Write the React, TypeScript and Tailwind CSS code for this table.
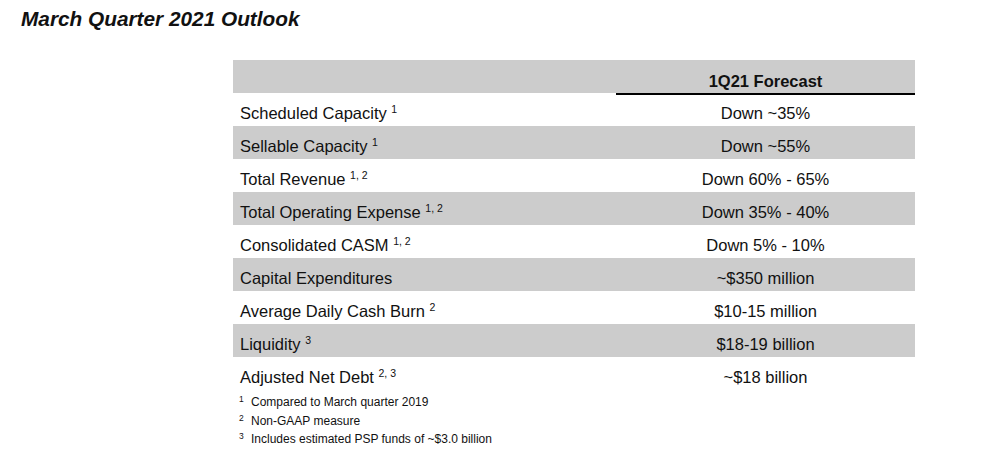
import React from "react";

type Row = { label: string; sup?: string; value: string; gray: boolean };

const rows: Row[] = [
  { label: "Sellable Capacity", sup: "1", value: "Down ~55%", gray: true },
  { label: "Total Revenue", sup: "1, 2", value: "Down 60% - 65%", gray: false },
  { label: "Total Operating Expense", sup: "1, 2", value: "Down 35% - 40%", gray: true },
  { label: "Consolidated CASM", sup: "1, 2", value: "Down 5% - 10%", gray: false },
  { label: "Capital Expenditures", value: "~$350 million", gray: true },
  { label: "Average Daily Cash Burn", sup: "2", value: "$10-15 million", gray: false },
  { label: "Liquidity", sup: "3", value: "$18-19 billion", gray: true },
  { label: "Adjusted Net Debt", sup: "2, 3", value: "~$18 billion", gray: false },
];

const footnotes = [
  { n: "1", t: "Compared to March quarter 2019" },
  { n: "2", t: "Non-GAAP measure" },
  { n: "3", t: "Includes estimated PSP funds of ~$3.0 billion" },
];

function Label({ label, sup }: { label: string; sup?: string }) {
  return (
    <span>
      {label}
      {sup ? (
        <>
          {" "}
          <sup className="text-[10.5px] top-[-6px]">{sup}</sup>
        </>
      ) : null}
    </span>
  );
}

export default function App() {
  return (
    <div
      className="w-[1007px] h-[473px] bg-white text-[#111111] overflow-hidden"
      style={{ fontFamily: '"Liberation Sans", Arial, sans-serif' }}
    >
      <div className="pl-[21px] pt-[7px] text-[20.8px] leading-[23px] font-bold italic">
        March Quarter 2021 Outlook
      </div>
      <div className="ml-[233px] mt-[30px] w-[682px]">
        <div className="h-[33px] bg-[#cccccc] flex">
          <div className="w-[383px]" />
          <div className="flex-1 text-center pt-[12px] text-[16.5px] leading-[18px] font-bold">
            1Q21 Forecast
          </div>
        </div>
        <div className="flex">
          <div className="w-[383px]" />
          <div className="flex-1 h-[2px] bg-black" />
        </div>
        <div className="h-[31px] flex text-[16.5px] leading-[18px] pt-[9px]">
          <div className="w-[383px] pl-[7px]">
            <Label label="Scheduled Capacity" sup="1" />
          </div>
          <div className="flex-1 text-center">Down ~35%</div>
        </div>
        {rows.map((r) => (
          <div
            key={r.label}
            className={`h-[33px] flex text-[16.5px] leading-[18px] pt-[11px] ${
              r.gray ? "bg-[#cccccc]" : "bg-white"
            }`}
          >
            <div className="w-[383px] pl-[7px]">
              <Label label={r.label} sup={r.sup} />
            </div>
            <div className="flex-1 text-center">{r.value}</div>
          </div>
        ))}
        <div className="pl-[6px] pt-[4px] flex flex-col">
          {footnotes.map((f) => (
            <div key={f.n} className="h-[18.5px] text-[12px] leading-[16px] flex">
              <span className="w-[12px]">
                <sup className="text-[8.5px] top-[-4px]">{f.n}</sup>
              </span>
              <span>{f.t}</span>
            </div>
          ))}
        </div>
      </div>
    </div>
  );
}
